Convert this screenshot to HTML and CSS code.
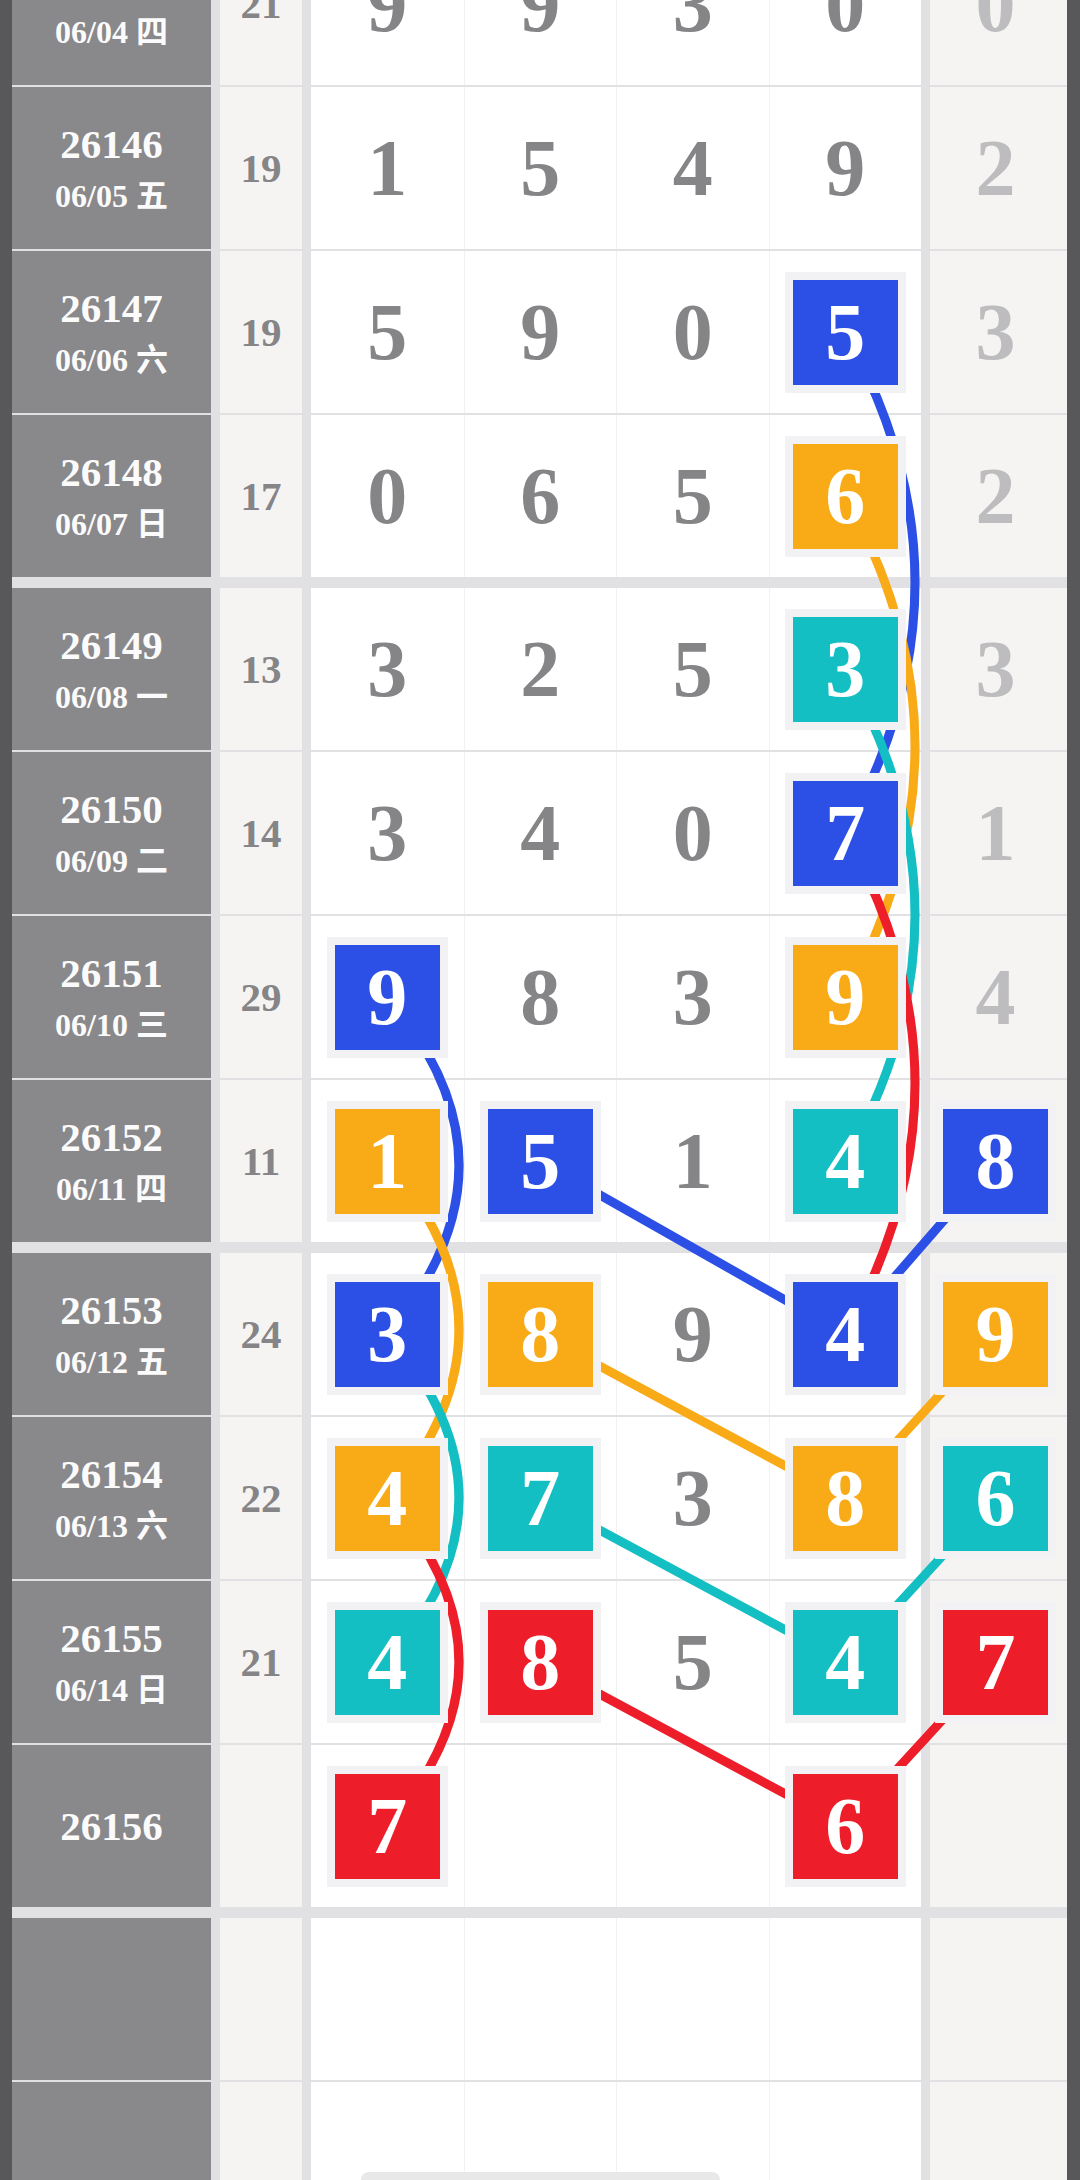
FILE: index.html
```html
<!DOCTYPE html>
<html lang="zh-Hant">
<head>
  <meta charset="UTF-8" />
  <meta name="viewport" content="width=device-width, initial-scale=1.0"/>
  <title>走勢圖</title>
  <link rel="stylesheet" href="styles.css">
</head>
<body>
  <div class="page">

    <!-- trend lines, drawn under the boxes -->
    <svg class="lines" width="1080" height="2180" viewBox="0 0 1080 2180">
      <g fill="none" stroke-width="9">
        <path d="M845 332 Q985 582.5 845 833" stroke="#2c4fe6"/>
        <path d="M845 496 Q985 746.5 845 997" stroke="#f9aa17"/>
        <path d="M845 669 Q985 915 845 1161" stroke="#14bfc3"/>
        <path d="M845 833 Q985 1083.5 845 1334" stroke="#ee1d2a"/>

        <path d="M387.5 997 Q530.5 1165.5 387.5 1334" stroke="#2c4fe6"/>
        <path d="M387.5 1161 Q530.5 1329.5 387.5 1498" stroke="#f9aa17"/>
        <path d="M387.5 1334 Q530.5 1498 387.5 1662" stroke="#14bfc3"/>
        <path d="M387.5 1498 Q530.5 1662 387.5 1826" stroke="#ee1d2a"/>

        <path d="M540 1161 L845 1334 L995.5 1161" stroke="#2c4fe6"/>
        <path d="M540 1334 L845 1498 L995.5 1334" stroke="#f9aa17"/>
        <path d="M540 1498 L845 1662 L995.5 1498" stroke="#14bfc3"/>
        <path d="M540 1662 L845 1826 L995.5 1662" stroke="#ee1d2a"/>
      </g>
    </svg>

    <div class="board">

      <div class="group">
        <div class="row">
          <div class="period"><div class="pid">26145</div><div class="pdate">06/04 四</div></div>
          <div class="sum">21</div>
          <div class="digits"><div class="d">9</div><div class="d">9</div><div class="d">3</div><div class="d">0</div></div>
          <div class="last">0</div>
        </div>
        <div class="row">
          <div class="period"><div class="pid">26146</div><div class="pdate">06/05 五</div></div>
          <div class="sum">19</div>
          <div class="digits"><div class="d">1</div><div class="d">5</div><div class="d">4</div><div class="d">9</div></div>
          <div class="last">2</div>
        </div>
        <div class="row">
          <div class="period"><div class="pid">26147</div><div class="pdate">06/06 六</div></div>
          <div class="sum">19</div>
          <div class="digits"><div class="d">5</div><div class="d">9</div><div class="d">0</div><div class="d"><span class="box blue">5</span></div></div>
          <div class="last">3</div>
        </div>
        <div class="row">
          <div class="period"><div class="pid">26148</div><div class="pdate">06/07 日</div></div>
          <div class="sum">17</div>
          <div class="digits"><div class="d">0</div><div class="d">6</div><div class="d">5</div><div class="d"><span class="box orange">6</span></div></div>
          <div class="last">2</div>
        </div>
      </div>

      <div class="group">
        <div class="row">
          <div class="period"><div class="pid">26149</div><div class="pdate">06/08 一</div></div>
          <div class="sum">13</div>
          <div class="digits"><div class="d">3</div><div class="d">2</div><div class="d">5</div><div class="d"><span class="box teal">3</span></div></div>
          <div class="last">3</div>
        </div>
        <div class="row">
          <div class="period"><div class="pid">26150</div><div class="pdate">06/09 二</div></div>
          <div class="sum">14</div>
          <div class="digits"><div class="d">3</div><div class="d">4</div><div class="d">0</div><div class="d"><span class="box blue">7</span></div></div>
          <div class="last">1</div>
        </div>
        <div class="row">
          <div class="period"><div class="pid">26151</div><div class="pdate">06/10 三</div></div>
          <div class="sum">29</div>
          <div class="digits"><div class="d"><span class="box blue">9</span></div><div class="d">8</div><div class="d">3</div><div class="d"><span class="box orange">9</span></div></div>
          <div class="last">4</div>
        </div>
        <div class="row">
          <div class="period"><div class="pid">26152</div><div class="pdate">06/11 四</div></div>
          <div class="sum">11</div>
          <div class="digits"><div class="d"><span class="box orange">1</span></div><div class="d"><span class="box blue">5</span></div><div class="d">1</div><div class="d"><span class="box teal">4</span></div></div>
          <div class="last"><span class="box blue">8</span></div>
        </div>
      </div>

      <div class="group">
        <div class="row">
          <div class="period"><div class="pid">26153</div><div class="pdate">06/12 五</div></div>
          <div class="sum">24</div>
          <div class="digits"><div class="d"><span class="box blue">3</span></div><div class="d"><span class="box orange">8</span></div><div class="d">9</div><div class="d"><span class="box blue">4</span></div></div>
          <div class="last"><span class="box orange">9</span></div>
        </div>
        <div class="row">
          <div class="period"><div class="pid">26154</div><div class="pdate">06/13 六</div></div>
          <div class="sum">22</div>
          <div class="digits"><div class="d"><span class="box orange">4</span></div><div class="d"><span class="box teal">7</span></div><div class="d">3</div><div class="d"><span class="box orange">8</span></div></div>
          <div class="last"><span class="box teal">6</span></div>
        </div>
        <div class="row">
          <div class="period"><div class="pid">26155</div><div class="pdate">06/14 日</div></div>
          <div class="sum">21</div>
          <div class="digits"><div class="d"><span class="box teal">4</span></div><div class="d"><span class="box red">8</span></div><div class="d">5</div><div class="d"><span class="box teal">4</span></div></div>
          <div class="last"><span class="box red">7</span></div>
        </div>
        <div class="row">
          <div class="period"><div class="pid">26156</div></div>
          <div class="sum"></div>
          <div class="digits"><div class="d"><span class="box red">7</span></div><div class="d"></div><div class="d"></div><div class="d"><span class="box red">6</span></div></div>
          <div class="last"></div>
        </div>
      </div>

      <div class="group">
        <div class="row">
          <div class="period"></div>
          <div class="sum"></div>
          <div class="digits"><div class="d"></div><div class="d"></div><div class="d"></div><div class="d"></div></div>
          <div class="last"></div>
        </div>
        <div class="row">
          <div class="period"></div>
          <div class="sum"></div>
          <div class="digits"><div class="d"></div><div class="d"></div><div class="d"></div><div class="d"></div></div>
          <div class="last"></div>
        </div>
      </div>

    </div>

    <div class="scrollbar"></div>
  </div>
</body>
</html>
```

FILE: styles.css
```css
html, body {
  margin: 0;
  padding: 0;
  height: 100%;
  overflow: hidden;
  background: #58575a;
  font-family: "Liberation Serif", "Noto Sans CJK TC", serif;
}

.page {
  position: relative;
  width: 1080px;
  height: 2180px;
  overflow: hidden;
}

.lines {
  position: absolute;
  top: 0;
  left: 0;
  z-index: 1;
}

/* the list is scrolled, so the first row sits partly above the top */
.board {
  margin: -77px 13px 0 12px;
  display: flex;
  flex-direction: column;
  gap: 11px;
  background: #e1e0e2;
}

.group {
  display: flex;
  flex-direction: column;
  gap: 2px;
}

.row {
  display: grid;
  grid-template-columns: 199px 82px 610px 137px;
  column-gap: 9px;
  height: 162px;
}

.period {
  background: #89888b;
  color: #fbfbfb;
  font-weight: bold;
  display: flex;
  flex-direction: column;
  justify-content: center;
  align-items: center;
  gap: 15px;
  line-height: 1;
}

.pid {
  font-size: 41px;
}

.pdate {
  font-size: 32px;
}

.sum {
  background: #f6f4f2;
  color: #858487;
  font-weight: bold;
  font-size: 41px;
  line-height: 1;
  display: flex;
  justify-content: center;
  align-items: center;
}

.digits {
  background: #fff;
  display: grid;
  grid-template-columns: repeat(4, 1fr);
}

.d {
  display: flex;
  justify-content: center;
  align-items: center;
  color: #858487;
  font-weight: bold;
  font-size: 80px;
  line-height: 1;
}

.d + .d {
  border-left: 1px solid #f1f1f2;
}

.last {
  background: #f6f4f2;
  color: #bdbcbe;
  font-weight: bold;
  font-size: 80px;
  line-height: 1;
  display: flex;
  justify-content: center;
  align-items: center;
  padding-right: 6px;
}

.box {
  position: relative;
  z-index: 2;
  width: 105px;
  height: 105px;
  display: flex;
  justify-content: center;
  align-items: center;
  color: #fff;
  box-shadow: 0 0 0 8px #f2f2f4;
}

.blue { background: #2c4fe6; }
.orange { background: #f9aa17; }
.teal { background: #14bfc3; }
.red { background: #ee1d2a; }

.scrollbar {
  position: absolute;
  left: 361px;
  top: 2172px;
  width: 359px;
  height: 16px;
  border-radius: 8px;
  background: #e8e8e9;
  z-index: 3;
}
```
